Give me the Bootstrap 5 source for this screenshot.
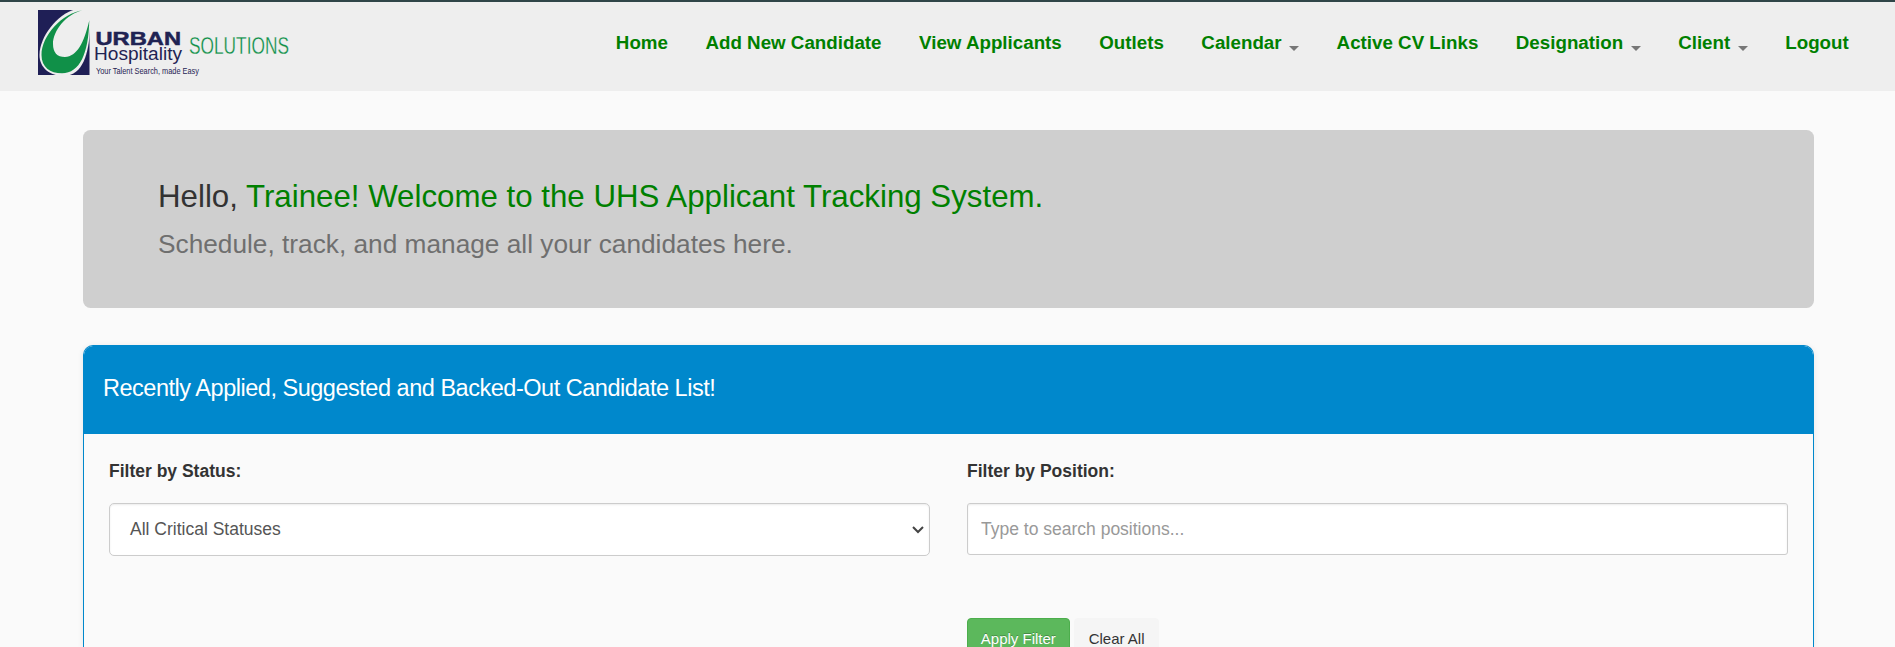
<!DOCTYPE html>
<html lang="en">
<head>
<meta charset="utf-8">
<meta name="viewport" content="width=device-width, initial-scale=1">
<title>UHS Applicant Tracking System</title>
<link href="https://cdn.jsdelivr.net/npm/bootstrap@5.3.0/dist/css/bootstrap.min.css" rel="stylesheet">
<style>
body{font-family:"Liberation Sans",Arial,sans-serif;background:#fafafa;color:#333;overflow:hidden;height:647px}
.site-nav{background:#eee;border-top:2px solid #2f4548;height:91px;padding:0 27.5px 0 37px;align-items:flex-start}
.site-nav .nav-link{color:green;font-weight:700;font-size:18.75px;line-height:25px;padding:28px 18.75px 0;white-space:nowrap}
.site-nav .nav-link:hover{color:#0a5a0a}
.menu-caret{display:inline-block;border:5px solid transparent;border-top-color:#777;border-bottom:0;margin-left:7.5px;vertical-align:-2px}
.logo{margin-top:6px}
.logo svg{overflow:visible}
.wrap{margin:39px 81px 0 83px}
.hero{background:#cfcfcf;border-radius:7.5px;height:178px;padding:47px 75px 0}
.hero h1{font-size:31.25px;line-height:40px;font-weight:400;margin:0;color:#333}
.hero h1 span{color:green}
.hero p{font-size:26.25px;line-height:36px;margin:9px 0 0;color:#6f6f6f}
.panel{margin-top:37px;border:1px solid #0088cc;border-bottom:0;border-radius:10px 10px 0 0;background:#fafafa;height:302px;overflow:hidden;box-shadow:0 1px 6px rgba(0,0,0,.08)}
.panel-top{background:#0088cc;color:#fff;height:88px;border-radius:8px 8px 0 0;padding:27px 19px 0}
.panel-top h2{font-size:23.5px;letter-spacing:-.48px;line-height:30px;font-weight:400;margin:0}
.filters{padding:25px 25px 0}
.filters .row{--bs-gutter-x:37px;margin:0 -18.5px}
.filters .col-6{padding:0 18.5px}
.filters label{font-size:17.5px;line-height:25px;font-weight:700;margin-bottom:19px;display:block}
.field{border:1px solid #ccc;background:#fff;color:#555;font-size:17.5px;box-shadow:inset 0 1px 2px rgba(0,0,0,.08);border-radius:5px;height:53px;padding:0 20px}
.field svg{margin-right:-15px}
input.field{border-radius:3px;height:52px;padding:0 13px;width:100%;display:block;outline:0}
input.field::placeholder{color:#999;opacity:1}
.actions{margin-top:63px;gap:4px}
.actions .btn{font-size:15px;line-height:25px;padding:7px 12.8px}
.btn-apply{background:#5cb85c;color:#fff;border:1px solid #4cae4c;border-radius:4px;text-shadow:0 -1px 0 rgba(0,0,0,.25)}
.actions .btn-clear{background:#f5f5f5;color:#333;border:1px solid #f5f5f5;border-radius:4px;padding:7px 14px}
</style>
</head>
<body>
<nav class="site-nav d-flex justify-content-between">
  <a class="logo d-block" href="#" aria-label="Urban Hospitality Solutions">
    <svg width="256" height="72" viewBox="37 8 256 72" class="d-block">
      <path fill="#1f1f56" d="M38 10h51.500v65H38z"/>
      <path fill="#eee" d="M90 9v19C89 53 83 75.500 64 76 50 76 39.500 68 39.500 55 39.500 37 57 14 76 9z"/>
      <path fill="#109048" d="M83 10.300C62 13 41.500 36 41.500 55c0 12 8.500 18.300 20.500 18.300 18 0 26.500-20 27.300-53C84 43 77 56.500 65 57 57 57 53 52.500 53 44c0-13 13-30 30-33.700z"/>
      <text x="95.500" y="44.500" font-family="Liberation Sans" font-weight="700" font-size="19" textLength="85.500" lengthAdjust="spacingAndGlyphs" fill="#1f2353" stroke="#1f2353" stroke-width=".5">URBAN</text>
      <text x="94" y="60" font-family="Liberation Sans" font-size="17.500" textLength="88" lengthAdjust="spacingAndGlyphs" fill="#1f2353">Hospitality</text>
      <text x="96" y="74.300" font-family="Liberation Sans" font-size="8.200" textLength="103" lengthAdjust="spacingAndGlyphs" fill="#1f2353">Your Talent Search, made Easy</text>
      <text x="189" y="53.700" font-family="Liberation Sans" font-size="24.500" textLength="100" lengthAdjust="spacingAndGlyphs" fill="#109048" stroke="#eee" stroke-width=".3">SOLUTIONS</text>
    </svg>
  </a>
  <div class="nav flex-nowrap">
    <a class="nav-link" href="#">Home</a>
    <a class="nav-link" href="#">Add New Candidate</a>
    <a class="nav-link" href="#">View Applicants</a>
    <a class="nav-link" href="#">Outlets</a>
    <a class="nav-link" href="#">Calendar<span class="menu-caret"></span></a>
    <a class="nav-link" href="#">Active CV Links</a>
    <a class="nav-link" href="#">Designation<span class="menu-caret"></span></a>
    <a class="nav-link" href="#">Client<span class="menu-caret"></span></a>
    <a class="nav-link" href="#">Logout</a>
  </div>
</nav>
<main class="wrap">
  <section class="hero">
    <h1>Hello, <span>Trainee! Welcome to the UHS Applicant Tracking System.</span></h1>
    <p>Schedule, track, and manage all your candidates here.</p>
  </section>
  <section class="panel">
    <header class="panel-top"><h2>Recently Applied, Suggested and Backed-Out Candidate List!</h2></header>
    <form class="filters">
      <div class="row">
        <div class="col-6">
          <label>Filter by Status:</label>
          <div class="field d-flex align-items-center justify-content-between" role="combobox" aria-expanded="false" tabindex="0"><span>All Critical Statuses</span>
            <svg width="12" height="8" viewBox="0 0 12 8" fill="none" stroke="#444" stroke-width="2"><path d="M1 1l5 5 5-5"/></svg></div>
        </div>
        <div class="col-6">
          <label for="pos">Filter by Position:</label>
          <input id="pos" class="field" placeholder="Type to search positions...">
          <div class="actions d-flex">
            <button type="button" class="btn btn-apply">Apply Filter</button>
            <button type="button" class="btn btn-clear">Clear All</button>
          </div>
        </div>
      </div>
    </form>
  </section>
</main>
<script src="https://cdn.jsdelivr.net/npm/bootstrap@5.3.0/dist/js/bootstrap.bundle.min.js"></script>
</body>
</html>
